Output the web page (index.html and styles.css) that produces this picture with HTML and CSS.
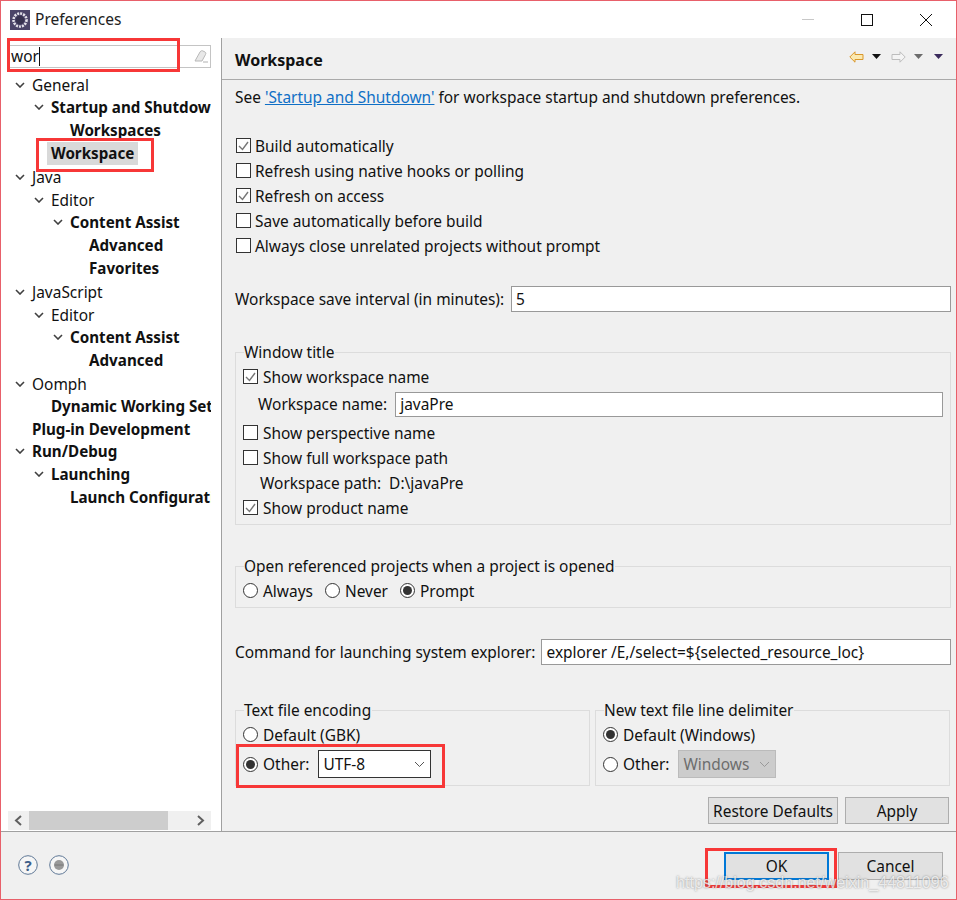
FILE: index.html
```html
<!DOCTYPE html>
<html>
<head>
    <title>Preferences</title>
    <link rel="stylesheet" href="styles.css">
</head>
<body>
    <svg class="defs" width="0" height="0">
        <symbol id="chev" viewBox="0 0 10 6"><path d="M1 1l4 4 4-4" fill="none" stroke="#404040" stroke-width="1.6"/></symbol>
        <symbol id="tick" viewBox="0 0 13 13"><path d="M2 7l3.5 3.5L11 3" fill="none" stroke="#777" stroke-width="1.4"/></symbol>
    </svg>

    <div class="window">
        <header class="titlebar">
            <svg class="app-icon" width="20" height="20" viewBox="0 0 20 20">
                <rect width="20" height="20" fill="#4b4468"/>
                <circle cx="10" cy="10" r="6.5" fill="none" stroke="#e4e2ea" stroke-width="2.6" stroke-dasharray="2 1"/>
                <circle cx="10" cy="10" r="4.2" fill="#37324f"/>
            </svg>
            <span class="title">Preferences</span>
            <div class="win-btns">
                <svg width="14" height="14" viewBox="0 0 14 14"><path d="M1 6.5h12" stroke="#c8c8c8"/></svg>
                <svg width="14" height="14" viewBox="0 0 14 14"><rect x="1.5" y="1.5" width="11" height="11" fill="none" stroke="#111"/></svg>
                <svg width="14" height="14" viewBox="0 0 14 14"><path d="M1 1l12 12M13 1L1 13" stroke="#111"/></svg>
            </div>
        </header>

        <div class="main">
            <aside class="sidebar">
                <div class="search">
                    <span class="search-text">wor</span><span class="caret"></span>
                    <svg class="eraser" width="14" height="13" viewBox="0 0 14 13"><path d="M1 11L6 2c1-1.500 2-1.500 3-1l2 1c1 .6 1 1.500.5 2.500L8 11H3z" fill="#e8e8e8" stroke="#b8b8b8"/><path d="M9 12h5" stroke="#b0b0b0"/></svg>
                </div>
                <div class="tree">
                    <div class="row l0"><svg class="chev"><use href="#chev"/></svg><span>General</span></div>
                    <div class="row l1 bold"><svg class="chev"><use href="#chev"/></svg><span>Startup and Shutdown</span></div>
                    <div class="row l2 bold"><i class="chev"></i><span>Workspaces</span></div>
                    <div class="row l1 bold"><i class="chev"></i><span class="selected">Workspace</span></div>
                    <div class="row l0"><svg class="chev"><use href="#chev"/></svg><span>Java</span></div>
                    <div class="row l1"><svg class="chev"><use href="#chev"/></svg><span>Editor</span></div>
                    <div class="row l2 bold"><svg class="chev"><use href="#chev"/></svg><span>Content Assist</span></div>
                    <div class="row l3 bold"><i class="chev"></i><span>Advanced</span></div>
                    <div class="row l3 bold"><i class="chev"></i><span>Favorites</span></div>
                    <div class="row l0"><svg class="chev"><use href="#chev"/></svg><span>JavaScript</span></div>
                    <div class="row l1"><svg class="chev"><use href="#chev"/></svg><span>Editor</span></div>
                    <div class="row l2 bold"><svg class="chev"><use href="#chev"/></svg><span>Content Assist</span></div>
                    <div class="row l3 bold"><i class="chev"></i><span>Advanced</span></div>
                    <div class="row l0"><svg class="chev"><use href="#chev"/></svg><span>Oomph</span></div>
                    <div class="row l1 bold"><i class="chev"></i><span>Dynamic Working Sets</span></div>
                    <div class="row l0 bold"><i class="chev"></i><span>Plug-in Development</span></div>
                    <div class="row l0 bold"><svg class="chev"><use href="#chev"/></svg><span>Run/Debug</span></div>
                    <div class="row l1 bold"><svg class="chev"><use href="#chev"/></svg><span>Launching</span></div>
                    <div class="row l2 bold"><i class="chev"></i><span>Launch Configurations</span></div>
                </div>
                <div class="hscroll">
                    <svg width="21" height="19" viewBox="0 0 21 19"><path d="M13 5l-5 4.500 5 4.500" fill="none" stroke="#606060" stroke-width="2"/></svg>
                    <div class="hscroll-track"><div class="hscroll-thumb"></div></div>
                    <svg width="21" height="19" viewBox="0 0 21 19"><path d="M8 5l5 4.500-5 4.500" fill="none" stroke="#606060" stroke-width="2"/></svg>
                </div>
            </aside>

            <section class="page">
                <div class="page-head">
                    <h2>Workspace</h2>
                    <div class="nav-icons">
                        <svg width="15" height="12" viewBox="0 0 15 12"><path d="M.8 6L6 .8v2.700h8v5H6v2.700z" fill="#fbe9b0" stroke="#d9972b"/></svg>
                        <svg class="tri tri-back" width="9" height="5" viewBox="0 0 9 5"><path d="M0 0h9L4.500 5z" fill="#111"/></svg>
                        <svg class="fwd" width="15" height="12" viewBox="0 0 15 12"><path d="M14.200 6L9 .8v2.700H1v5h8v2.700z" fill="#f4f4f4" stroke="#bdbdbd"/></svg>
                        <svg class="tri tri-fwd" width="9" height="5" viewBox="0 0 9 5"><path d="M0 0h9L4.500 5z" fill="#6c6c6c"/></svg>
                        <svg class="tri tri-menu" width="9" height="5" viewBox="0 0 9 5"><path d="M0 0h9L4.500 5z" fill="#3a2a5c"/></svg>
                    </div>
                </div>

                <p class="intro">See <a href="#">'Startup and Shutdown'</a> for workspace startup and shutdown preferences.</p>

                <div class="checks">
                    <div class="opt"><span class="box"><svg width="13" height="13"><use href="#tick"/></svg></span>Build automatically</div>
                    <div class="opt"><span class="box"></span>Refresh using native hooks or polling</div>
                    <div class="opt"><span class="box"><svg width="13" height="13"><use href="#tick"/></svg></span>Refresh on access</div>
                    <div class="opt"><span class="box"></span>Save automatically before build</div>
                    <div class="opt"><span class="box"></span>Always close unrelated projects without prompt</div>
                </div>

                <div class="field-row save-row">
                    <label>Workspace save interval (in minutes):</label>
                    <div class="field">5</div>
                </div>

                <fieldset class="group title-group">
                    <legend>Window title</legend>
                    <div class="opt"><span class="box"><svg width="13" height="13"><use href="#tick"/></svg></span>Show workspace name</div>
                    <div class="field-row name-row">
                        <label>Workspace name:</label>
                        <div class="field">javaPre</div>
                    </div>
                    <div class="opt opt-gap"><span class="box"></span>Show perspective name</div>
                    <div class="opt"><span class="box"></span>Show full workspace path</div>
                    <div class="opt path-row">Workspace path:&nbsp; D:\javaPre</div>
                    <div class="opt"><span class="box"><svg width="13" height="13"><use href="#tick"/></svg></span>Show product name</div>
                </fieldset>

                <fieldset class="group open-group">
                    <legend>Open referenced projects when a project is opened</legend>
                    <div class="radios">
                        <div class="opt"><span class="radio"></span>Always</div>
                        <div class="opt"><span class="radio"></span>Never</div>
                        <div class="opt"><span class="radio on"></span>Prompt</div>
                    </div>
                </fieldset>

                <div class="field-row cmd-row">
                    <label>Command for launching system explorer:</label>
                    <div class="field">explorer /E,/select=${selected_resource_loc}</div>
                </div>

                <div class="enc-grid">
                    <fieldset class="group enc-group">
                        <legend>Text file encoding</legend>
                        <div class="opt"><span class="radio"></span>Default (GBK)</div>
                        <div class="opt combo-row"><span class="radio on"></span><span>Other:</span>
                            <div class="combo">UTF-8<svg width="11" height="6" viewBox="0 0 11 6"><path d="M1 1l4.500 4.500L10 1" fill="none" stroke="#555"/></svg></div>
                        </div>
                    </fieldset>
                    <fieldset class="group enc-group">
                        <legend>New text file line delimiter</legend>
                        <div class="opt"><span class="radio on"></span>Default (Windows)</div>
                        <div class="opt combo-row"><span class="radio"></span><span>Other:</span>
                            <div class="combo disabled">Windows<svg width="11" height="6" viewBox="0 0 11 6"><path d="M1 1l4.500 4.500L10 1" fill="none" stroke="#999"/></svg></div>
                        </div>
                    </fieldset>
                </div>

                <div class="page-btns">
                    <button class="btn btn-restore">Restore Defaults</button>
                    <button class="btn btn-apply">Apply</button>
                </div>
            </section>
        </div>

        <footer class="footer">
            <svg class="help" width="20" height="20" viewBox="0 0 20 20"><circle cx="10" cy="10" r="9.300" fill="#f6f6f6" stroke="#5f7896"/><text x="10" y="15.500" text-anchor="middle" class="help-q">?</text></svg>
            <svg class="help" width="20" height="20" viewBox="0 0 20 20"><circle cx="10" cy="10" r="9.300" fill="#f6f6f6" stroke="#5f7896"/><circle cx="10" cy="10" r="5" fill="#999"/><path d="M5.500 10h9" stroke="#777"/></svg>
            <div class="footer-btns">
                <button class="btn btn-ok">OK</button>
                <button class="btn btn-cancel">Cancel</button>
            </div>
        </footer>
    </div>

    <div class="mark mark-search"></div>
    <div class="mark mark-workspace"></div>
    <div class="mark mark-other"></div>
    <div class="mark mark-ok"></div>
    <div class="watermark">https://blog.csdn.net/weixin_44811096</div>
</body>
</html>
```

FILE: styles.css
```css
:root {
    --panel: #f0f0f0;
    --line: #a0a0a0;
    --group-line: #dcdcdc;
    --mark: #f73737;
}

* {
    box-sizing: border-box;
}

body {
    margin: 0;
    width: 957px;
    height: 900px;
    position: relative;
    overflow: hidden;
    font-family: "Noto Sans", sans-serif;
    font-size: 15.45px;
    color: #111;
}

.defs {
    position: absolute;
}

.window {
    height: 900px;
    display: flex;
    flex-direction: column;
    border: 1px solid #e8606a;
    background: var(--panel);
}

.titlebar {
    height: 37px;
    flex: none;
    background: white;
    display: flex;
    align-items: center;
    padding-left: 9px;
}

.app-icon {
    margin-right: 5px;
}

.title {
    font-size: 15.5px;
    color: #222;
    padding-bottom: 2px;
}

.win-btns {
    margin-left: auto;
    display: flex;
    gap: 45px;
    padding-right: 23px;
}

.main {
    height: 794px;
    flex: none;
    display: flex;
    border-bottom: 1px solid var(--line);
}

.sidebar {
    width: 221px;
    flex: none;
    background: white;
    border-right: 1px solid var(--line);
    padding: 7px 10px 1px 7px;
    display: flex;
    flex-direction: column;
}

.search {
    height: 23px;
    margin-left: 1px;
    border: 1px solid #c4c4c4;
    display: flex;
    align-items: center;
    padding-left: 1px;
    flex: none;
}

.search-text {
    line-height: 21px;
}

.caret {
    width: 1px;
    height: 19px;
    background: #111;
}

.eraser {
    margin-left: auto;
    margin-right: 2px;
}

.tree {
    flex: 1;
    margin-top: 5px;
    overflow: hidden;
}

.row {
    height: 22.95px;
    display: flex;
    align-items: center;
    white-space: nowrap;
}

.row:not(.bold) {
    padding-top: 2px;
}

.row.bold {
    font-weight: 700;
    font-size: 15.2px;
}

.l0 { padding-left: 7px; }
.l1 { padding-left: 26px; }
.l2 { padding-left: 45px; }
.l3 { padding-left: 64px; }

.chev {
    width: 10px;
    height: 6px;
    margin-right: 7px;
    flex: none;
}

.selected {
    background: #d9d9d9;
    margin-left: -4px;
    padding: 0 4px;
    line-height: 23px;
}

.hscroll {
    height: 19px;
    flex: none;
    display: flex;
    background: var(--panel);
}

.hscroll-track {
    flex: 1;
}

.hscroll-thumb {
    width: 139px;
    height: 19px;
    background: #cdcdcd;
}

.page {
    flex: 1;
    padding: 0 5px 0 13px;
}

.page-head {
    height: 42px;
    margin: 0 -5px 0 -13px;
    padding: 0 13px 0 13px;
    border-bottom: 1px solid #aaa;
    display: flex;
    align-items: center;
    justify-content: space-between;
}

h2 {
    margin: 2px 0 0;
    font-size: 16px;
    font-weight: 700;
}

.nav-icons {
    display: flex;
    align-items: center;
    height: 38px;
    margin-bottom: 4px;
}

.tri-back { margin-left: 8px; }
.fwd { margin-left: 10px; }
.tri-fwd { margin-left: 8px; }
.tri-menu { margin-left: 11px; }

.intro {
    margin: 0;
    height: 34px;
    line-height: 34px;
}

a {
    color: #0f6fc6;
}

.checks {
    margin-top: 19px;
}

.opt {
    height: 25px;
    display: flex;
    align-items: center;
    white-space: nowrap;
}

.box {
    width: 15px;
    height: 15px;
    margin: 0 4px 0 1px;
    border: 1px solid #333;
    background: white;
    display: flex;
    flex: none;
}

.group .box {
    margin: 0 5px 0 0;
}

.radio {
    width: 15px;
    height: 15px;
    margin-right: 5px;
    border: 1px solid #333;
    border-radius: 50%;
    background: white;
    flex: none;
    display: flex;
    align-items: center;
    justify-content: center;
}

.radio.on::after {
    content: "";
    width: 9px;
    height: 9px;
    border-radius: 50%;
    background: #333;
}

.field-row {
    display: flex;
    align-items: center;
}

.field {
    flex: 1;
    height: 26px;
    line-height: 24px;
    padding-left: 4px;
    background: white;
    border: 1px solid #999;
}

.save-row {
    margin-top: 28px;
    gap: 7px;
}

.group {
    margin: 0;
    min-width: 0;
    padding: 2px 7px 4px;
    border: 1px solid var(--group-line);
}

legend {
    margin-left: 1px;
    padding: 0 1px 0 0;
    line-height: 20px;
}

.title-group {
    margin-top: 30px;
}

.name-row {
    margin-top: 3px;
    padding-left: 15px;
    gap: 8px;
}

.name-row label {
    padding-bottom: 2px;
}

.name-row .field {
    height: 25px;
    line-height: 23px;
}

.opt-gap {
    margin-top: 3px;
}

.path-row {
    padding-left: 17px;
}

.open-group {
    margin-top: 31px;
}

.radios {
    display: flex;
    gap: 12px;
}

.cmd-row {
    margin-top: 31px;
    gap: 6px;
}

.enc-grid {
    margin-top: 35px;
    display: grid;
    grid-template-columns: 355px 355px;
    gap: 5px;
}

.group.enc-group {
    padding-bottom: 7px;
}

.combo-row {
    height: 28px;
    margin-top: 3px;
}

.combo {
    margin-left: 9px;
    width: 113px;
    height: 28px;
    padding: 0 5px 0 4px;
    background: white;
    border: 1px solid #333;
    display: flex;
    align-items: center;
    justify-content: space-between;
}

.combo.disabled {
    width: 98px;
    background: #cccccc;
    border-color: #bbb;
    color: #6d6d6d;
}

.page-btns {
    margin-top: 11px;
    display: flex;
    justify-content: flex-end;
    gap: 7px;
    padding-right: 2px;
}

.btn {
    font-family: inherit;
    font-size: 15.45px;
    color: #111;
    height: 27px;
    padding: 0;
    background: #e1e1e1;
    border: 1px solid #adadad;
}

.btn-restore { width: 130px; }
.btn-apply { width: 104px; }

.footer {
    flex: 1;
    display: flex;
    align-items: flex-start;
    padding: 20px 13px 0 17px;
    gap: 11px;
}

.help {
    margin-top: 3px;
}

.help-q {
    font-size: 15px;
    font-weight: 700;
    fill: #3f5f8a;
}

.footer-btns {
    margin-left: auto;
    display: flex;
    gap: 9px;
}

.btn-ok,
.btn-cancel {
    width: 105px;
    height: 28px;
}

.btn-ok {
    border: 2px solid #0078d7;
}

/* red boxes drawn over the screenshot */
.mark {
    position: absolute;
    border: 3px solid var(--mark);
}

.mark-search { left: 7px; top: 38px; width: 173px; height: 34px; }
.mark-workspace { left: 36px; top: 138px; width: 118px; height: 34px; }
.mark-other { left: 236px; top: 744px; width: 209px; height: 44px; }
.mark-ok { left: 705px; top: 848px; width: 132px; height: 40px; }

.watermark {
    position: absolute;
    left: 676px;
    top: 872px;
    font-family: "Liberation Sans", sans-serif;
    font-size: 16.1px;
    line-height: 20px;
    color: rgba(255,255,255,0.75);
    text-shadow: 0 0 2px rgba(90,90,90,0.7);
    white-space: nowrap;
}
```
